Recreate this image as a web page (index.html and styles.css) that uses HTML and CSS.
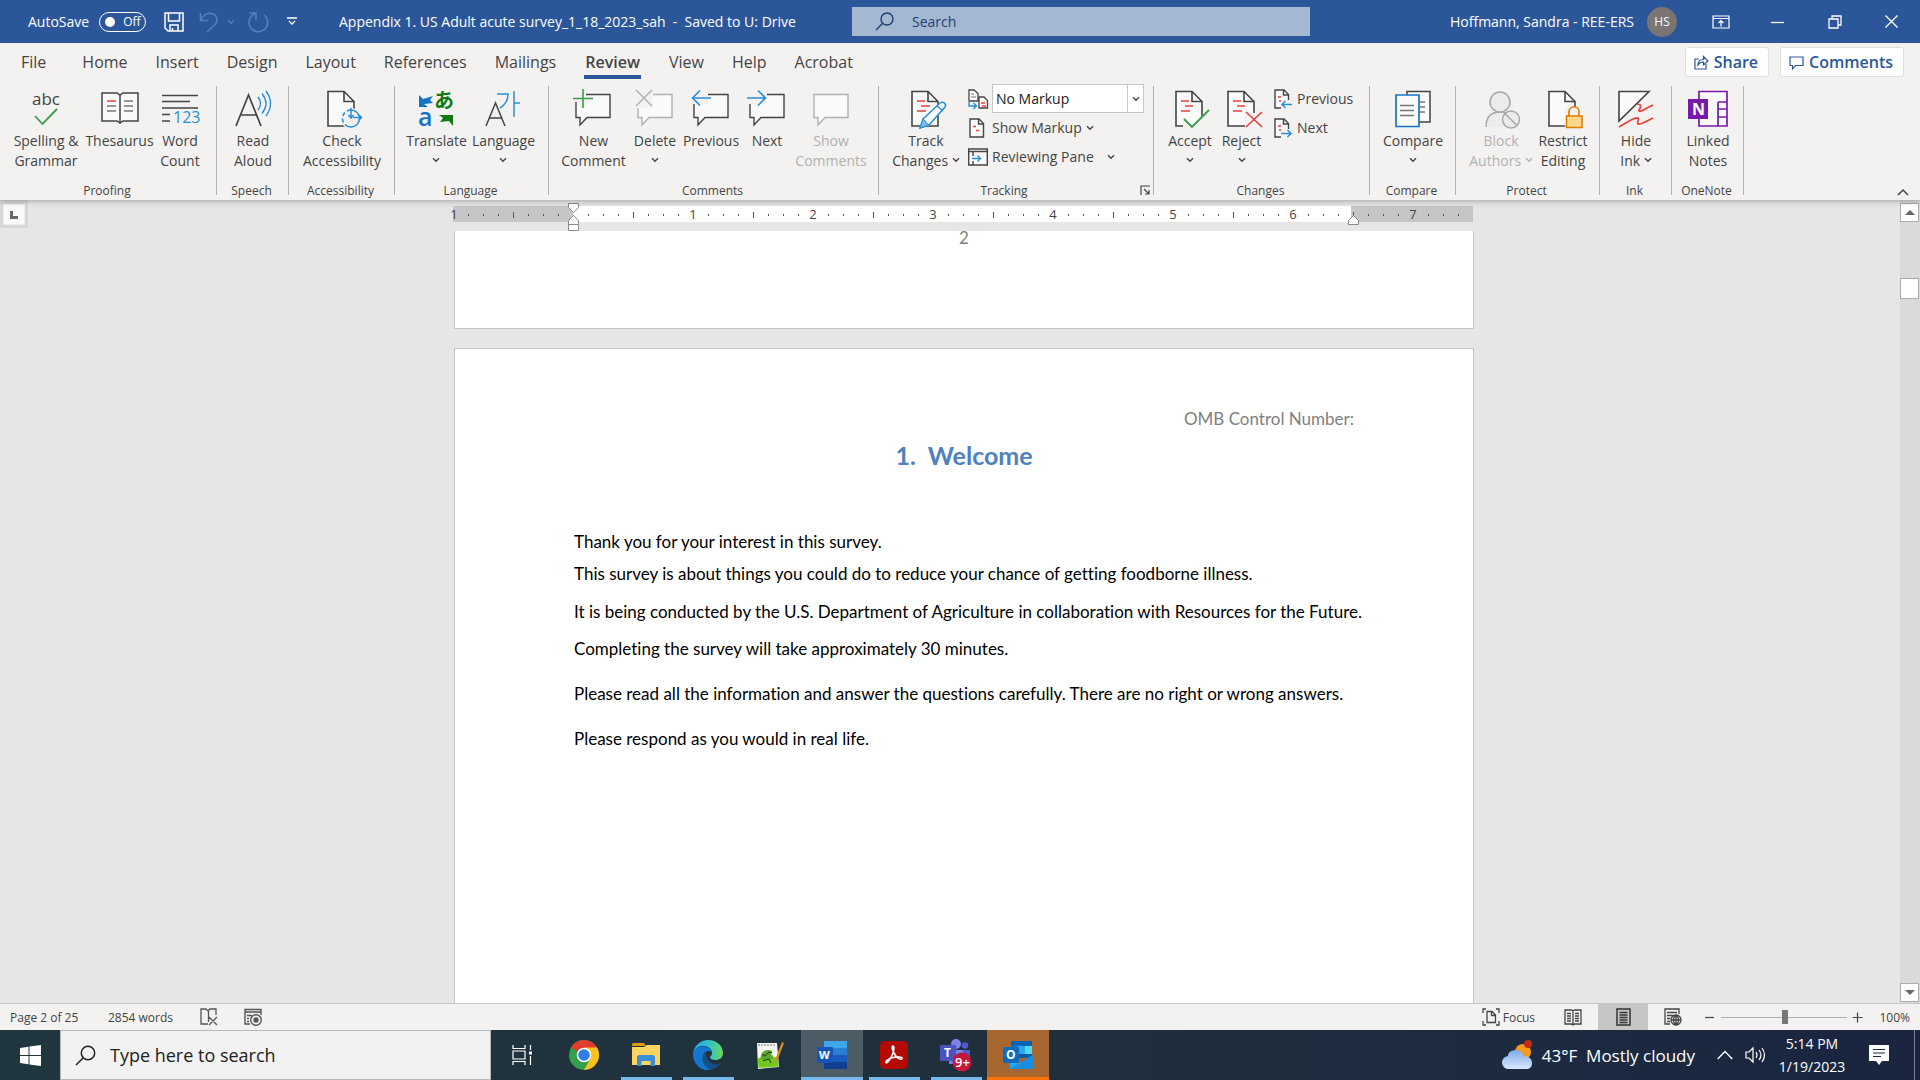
FILE: index.html
```html
<!DOCTYPE html>
<html lang="en">
<head>
    <meta charset="UTF-8">
    <meta name="viewport" content="width=device-width, initial-scale=1.0">
    <title>Appendix 1. US Adult acute survey_1_18_2023_sah</title>
    <link rel="stylesheet" href="styles.css">
</head>

<body>
    <!-- Shared shapes -->
    <svg class="defs" width="0" height="0" aria-hidden="true">
        <symbol id="chev" viewBox="0 0 8 6"><path d="M1 1.2l3 3 3-3" fill="none" stroke="currentColor" stroke-width="1.4"/></symbol>
        <symbol id="bubble" viewBox="0 0 40 38"><path d="M3 4.500h34v23H14l-7 7.500v-7.500H3z" fill="#fafafa" stroke="currentColor" stroke-width="1.400"/></symbol>
        <symbol id="doc" viewBox="0 0 36 38"><path d="M1 1.500h16l10 10v24.500H1z" fill="#fafafa" stroke="#444" stroke-width="1.600"/><path d="M17 1.500v10h10" fill="none" stroke="#444" stroke-width="1.600"/></symbol>
        <symbol id="doc-s" viewBox="0 0 20 20"><path d="M2 1h9l4.500 4.500V19H2z" fill="#fafafa" stroke="#444" stroke-width="1.400"/><path d="M10.500 1v5h5" fill="none" stroke="#444" stroke-width="1.400"/></symbol>
    </svg>

    <header class="titlebar">
        <div class="quick">
            <span>AutoSave</span>
            <button class="toggle" role="switch" aria-checked="false"><i></i>Off</button>
            <button class="icon save" aria-label="Save"><svg width="20" height="20" viewBox="0 0 20 20" fill="none" stroke="#fff" stroke-width="1.500"><path d="M1 1h18v18H4l-3-3zM4.500 1v8h11V1M6 19v-6h8v6M8.500 16v3"/></svg></button>
            <button class="icon undo" aria-label="Undo"><svg width="20" height="22" viewBox="0 0 20 22" fill="none" stroke="#5880bb" stroke-width="1.500"><path d="M1.500 2v7.500H9M1.500 9.500C5 3 9 1.500 13 2.500c5 1.500 6.500 7 3 11L8 21"/></svg></button>
            <button class="icon undo-more" aria-label="Undo list"><svg width="8" height="6"><use href="#chev"/></svg></button>
            <button class="icon redo" aria-label="Repeat"><svg width="22" height="22" viewBox="0 0 22 22" fill="none" stroke="#5880bb" stroke-width="1.500"><path d="M2 2h7v7M8.500 2.500A9.300 9.300 0 1 0 17 4"/></svg></button>
            <button class="icon more" aria-label="Customize Quick Access Toolbar"><svg width="10" height="9" viewBox="0 0 10 9" fill="none" stroke="#fff" stroke-width="1.300"><path d="M0 1h10M2 4l3 3 3-3"/></svg></button>
        </div>
        <div class="file-name">Appendix 1. US Adult acute survey_1_18_2023_sah &nbsp;-&nbsp; Saved to U: Drive</div>
        <label class="search">
            <svg width="19" height="19" viewBox="0 0 19 19" fill="none" stroke="#1e3f74" stroke-width="1.400"><circle cx="12" cy="7" r="6"/><path d="M7.500 11.500L1 18"/></svg>
            <input type="text" placeholder="Search" aria-label="Search">
        </label>
        <div class="account"><span>Hoffmann, Sandra - REE-ERS</span><span class="avatar">HS</span></div>
        <div class="window-buttons">
            <button aria-label="Ribbon Display Options"><svg width="18" height="14" viewBox="0 0 18 14" fill="none" stroke="#fff" stroke-width="1.200"><path d="M1 1h16v12H1zM1 3.500h16M9 11.500V6M6.500 8L9 5.500 11.500 8"/></svg></button>
            <button aria-label="Minimize"><svg width="13" height="14" viewBox="0 0 13 14"><path d="M0 7.500h13" stroke="#fff" stroke-width="1.300"/></svg></button>
            <button aria-label="Restore Down"><svg width="14" height="14" viewBox="0 0 14 14" fill="none" stroke="#fff" stroke-width="1.300"><path d="M1 4h9v9H1zM4 4V1h9v9h-3"/></svg></button>
            <button aria-label="Close"><svg width="13" height="13" viewBox="0 0 13 13"><path d="M.5.5l12 12M12.500.5l-12 12" stroke="#fff" stroke-width="1.400"/></svg></button>
        </div>
    </header>

    <nav class="tabs">
        <button>File</button>
        <button>Home</button>
        <button>Insert</button>
        <button>Design</button>
        <button>Layout</button>
        <button>References</button>
        <button>Mailings</button>
        <button class="active">Review</button>
        <button>View</button>
        <button>Help</button>
        <button>Acrobat</button>
        <div class="tab-actions">
            <button class="pill"><svg width="15" height="15" viewBox="0 0 15 15" fill="none" stroke="#2b579a" stroke-width="1.200"><path d="M5 4H1v10h11V9"/><path d="M4 10c0-4 2-5.500 5.500-5.500V1.500l4.500 4.500-4.500 4V7C7 7 5.500 7.500 4 10z"/></svg>Share</button>
            <button class="pill"><svg width="15" height="15" viewBox="0 0 15 15" fill="none" stroke="#2b579a" stroke-width="1.200"><path d="M1 2h13v8.500H6.500L3.500 14v-3.500H1z"/></svg>Comments</button>
        </div>
    </nav>

    <section class="ribbon">
        <div class="group proofing">
            <div class="tools">
                <button><svg width="40" height="38" viewBox="0 0 40 38"><text x="6" y="15" font-size="17" fill="#444">abc</text><path d="M9 26l7.500 8L31 19" fill="none" stroke="#3a9e4a" stroke-width="1.800"/></svg>Spelling &amp;<br>Grammar</button>
                <button><svg width="38" height="38" viewBox="0 0 38 38"><path d="M1 3h15l3 2 3-2h15v28H22l-3 2-3-2H1zM19 5v28" fill="#fafafa" stroke="#444" stroke-width="1.500"/><path d="M6 11h9" stroke="#e8403a" stroke-width="1.500"/><path d="M6 16h9M6 21h9M23 11h9M23 16h9M23 21h9" stroke="#777" stroke-width="1.300"/></svg>Thesaurus</button>
                <button><svg width="38" height="38" viewBox="0 0 38 38"><path d="M1 5.500h36M1 11.500h28M1 18h36M1 24.500h8M1 31h8" stroke="#444" stroke-width="1.400"/><text x="12" y="33" font-size="16" fill="#2b8fd6">123</text></svg>Word<br>Count</button>
            </div>
            <h2>Proofing</h2>
        </div>
        <div class="group speech">
            <div class="tools">
                <button><svg width="38" height="38" viewBox="0 0 38 38" fill="none"><path d="M2 36L14.500 5 27 36M6.500 25h16" stroke="#444" stroke-width="1.700"/><path d="M24 7q5 6.500 0 13M28 3.500q8 10 0 20M32 1q9 12.500 0 25" stroke="#2b8fd6" stroke-width="1.400"/></svg>Read<br>Aloud</button>
            </div>
            <h2>Speech</h2>
        </div>
        <div class="group accessibility">
            <div class="tools">
                <button><svg width="30" height="38" viewBox="0 0 30 38"><use href="#doc" width="36" height="38"/><circle cx="24" cy="28.500" r="10.500" fill="#f3f2f1"/><circle cx="24" cy="28.500" r="8.500" fill="none" stroke="#2b8fd6" stroke-width="1.500" stroke-dasharray="20 2.500 4 2.500 4 2.500"/><path d="M24 18v9.500M21.500 25l2.500 3 2.500-3M26 27.500h8M32 25l2.500 2.500L32 30" fill="none" stroke="#2b8fd6" stroke-width="1.500"/></svg>Check<br>Accessibility</button>
            </div>
            <h2>Accessibility</h2>
        </div>
        <div class="group language">
            <div class="tools">
                <button><svg width="36" height="38" viewBox="0 0 36 38"><path d="M1 5l4 4 10-3-3 4 3 3-9 1 4 3H1z" fill="#1473c6"/><path d="M35 36V25H21l4 3-3 4 9-1z" fill="#117a11"/><text x="0" y="36" font-size="25" font-weight="600" fill="#1473c6">a</text><text class="cjk" x="16" y="18" font-size="20" font-weight="700" fill="#117a11">あ</text></svg>Translate<svg class="chev" width="8" height="6"><use href="#chev"/></svg></button>
                <button><svg width="36" height="38" viewBox="0 0 36 38" fill="none"><path d="M1 36l9.500-23L20 36M4.500 28h12" stroke="#444" stroke-width="1.500"/><path d="M12 4h11c0 7-3 11-8 14M29 1v26M29 13h6" stroke="#2b8fd6" stroke-width="1.500"/></svg>Language<svg class="chev" width="8" height="6"><use href="#chev"/></svg></button>
            </div>
            <h2>Language</h2>
        </div>
        <div class="group comments">
            <div class="tools">
                <button><svg width="40" height="38" viewBox="0 0 40 38"><use href="#bubble"/><path d="M0 0h12v12H0z" fill="#f3f2f1"/><path d="M10 -1v19M1 9h19" stroke="#f3f2f1" stroke-width="6"/><path d="M10 -1v19M0 8.500h20" stroke="#3a9e4a" stroke-width="1.600"/></svg>New<br>Comment</button>
                <button disabled><svg width="40" height="38" viewBox="0 0 40 38"><use href="#bubble"/><path d="M0 0h18v18H0z" fill="#f3f2f1"/><path d="M1 0l16 16M17 0L1 16" stroke="#b1b1b1" stroke-width="1.500"/></svg><span class="on">Delete</span><svg class="chev on" width="8" height="6"><use href="#chev"/></svg></button>
                <button><svg width="40" height="38" viewBox="0 0 40 38"><use href="#bubble"/><path d="M0 0h17v14H0z" fill="#f3f2f1"/><path d="M20 8H1M9 .5L1.500 8 9 15.500" fill="none" stroke="#2b8fd6" stroke-width="1.600"/></svg>Previous</button>
                <button><svg width="40" height="38" viewBox="0 0 40 38"><use href="#bubble"/><path d="M0 0h20v14H0z" fill="#f3f2f1"/><path d="M0 8h19M11 .5L18.500 8 11 15.500" fill="none" stroke="#2b8fd6" stroke-width="1.600"/></svg>Next</button>
                <button disabled><svg width="40" height="38" viewBox="0 0 40 38"><use href="#bubble"/></svg>Show<br>Comments</button>
            </div>
            <h2>Comments</h2>
        </div>
        <div class="group tracking">
            <div class="tools">
                <button><svg width="30" height="38" viewBox="0 0 30 38"><use href="#doc" width="36" height="38"/><path d="M6 11h8M10 16h9M6 21h9" stroke="#e8403a" stroke-width="1.500"/><path d="M9 38l3-9 17-16c3-2 7 1 5 4L18 35z" fill="#fafafa" stroke="#2b8fd6" stroke-width="1.500"/><path d="M9 38l3-9 6 6z" fill="#7db9e8" stroke="#2b8fd6"/><path d="M26 16l6 5" stroke="#2b8fd6" stroke-width="1.300"/></svg>Track<br>Changes <svg class="chev-in" width="8" height="6"><use href="#chev"/></svg></button>
                <div class="rows">
                    <div class="row">
                        <svg width="20" height="20" viewBox="0 0 20 20"><path d="M1 1h5l4 3.500V12H1z" fill="#fafafa" stroke="#444" stroke-width="1.300"/><path d="M11 8h5l3.500 3.500V19H11z" fill="#fafafa" stroke="#444" stroke-width="1.300"/><path d="M3 5h3M3 8h5" stroke="#777"/><path d="M13 14h4M14 17h4" stroke="#e8403a" stroke-width="1.300"/><path d="M1 13v4h7M5.500 14l3 3-3 3" fill="none" stroke="#2b8fd6" stroke-width="1.400"/></svg>
                        <div class="markup">
                            <select aria-label="Display for Review"><option>No Markup</option></select>
                            <svg width="8" height="6"><use href="#chev"/></svg>
                        </div>
                    </div>
                    <button class="row"><svg width="20" height="20" viewBox="0 0 20 20"><use href="#doc-s"/><path d="M5 8.500h3M8 12.500h3" stroke="#e8403a" stroke-width="1.500"/></svg>Show Markup<svg width="8" height="6"><use href="#chev"/></svg></button>
                    <button class="row pane"><svg width="20" height="20" viewBox="0 0 20 20"><path d="M.7 2h18.600v16H.7z" fill="#fafafa" stroke="#444" stroke-width="1.400"/><path d="M1 4.500h18M5 5v4M5 14v4" stroke="#444" stroke-width="1.400"/><path d="M4 11.500h8M9.500 8.500l3 3-3 3" fill="none" stroke="#2b8fd6" stroke-width="1.400"/></svg>Reviewing Pane<svg width="8" height="6"><use href="#chev"/></svg></button>
                </div>
            </div>
            <h2>Tracking</h2>
            <button class="launcher" aria-label="Change Tracking Options"><svg width="10" height="10" viewBox="0 0 10 10" fill="none" stroke="#444" stroke-width="1.200"><path d="M1 10V1h9M4 4l5 5M9 5v4H5"/></svg></button>
        </div>
        <div class="group changes">
            <div class="tools">
                <button><svg width="30" height="38" viewBox="0 0 30 38"><use href="#doc" width="36" height="38"/><path d="M6 11h8M10 16h8M6 21h9" stroke="#e8403a" stroke-width="1.500"/><path d="M8 26l9 10L35 19v19H8z" fill="#f3f2f1"/><path d="M9 29l8 8 17-17" fill="none" stroke="#3a9e4a" stroke-width="1.800"/></svg>Accept<svg class="chev" width="8" height="6"><use href="#chev"/></svg></button>
                <button><svg width="30" height="38" viewBox="0 0 30 38"><use href="#doc" width="36" height="38"/><path d="M6 11h8M10 16h8M6 21h9" stroke="#e8403a" stroke-width="1.500"/><path d="M18 23h16v15H18z" fill="#f3f2f1"/><path d="M19 22l16 15M35 22L19 37" stroke="#e8403a" stroke-width="1.600"/></svg>Reject<svg class="chev" width="8" height="6"><use href="#chev"/></svg></button>
                <div class="rows">
                    <button class="row"><svg width="20" height="20" viewBox="0 0 20 20"><use href="#doc-s"/><path d="M5 8h3M6 12h3" stroke="#e8403a" stroke-width="1.500"/><path d="M8 11h12v9H8z" fill="#f3f2f1"/><path d="M19 15.500H9M12.500 12L9 15.500l3.500 3.500" fill="none" stroke="#2b8fd6" stroke-width="1.500"/></svg>Previous</button>
                    <button class="row"><svg width="20" height="20" viewBox="0 0 20 20"><use href="#doc-s"/><path d="M5 8h3M6 12h3" stroke="#e8403a" stroke-width="1.500"/><path d="M8 11h12v9H8z" fill="#f3f2f1"/><path d="M8 15.500h10M14.500 12l3.500 3.500-3.500 3.500" fill="none" stroke="#2b8fd6" stroke-width="1.500"/></svg>Next</button>
                </div>
            </div>
            <h2>Changes</h2>
        </div>
        <div class="group compare">
            <div class="tools">
                <button><svg width="36" height="38" viewBox="0 0 36 38"><path d="M12 1.500h23V32H12z" fill="#fafafa" stroke="#444" stroke-width="1.500"/><path d="M25 12h5M25 17h5M25 22h5" stroke="#777" stroke-width="1.400"/><path d="M1 5h23v31.500H1z" fill="#fafafa" stroke="#1473c6" stroke-width="1.700"/><path d="M5 15.500h14M5 20.500h14M5 25.500h14" stroke="#777" stroke-width="1.500"/></svg>Compare<svg class="chev" width="8" height="6"><use href="#chev"/></svg></button>
            </div>
            <h2>Compare</h2>
        </div>
        <div class="group protect">
            <div class="tools">
                <button disabled><svg width="34" height="38" viewBox="0 0 34 38" fill="#ececec" stroke="#a8a8a8" stroke-width="1.500"><path d="M2 37c0-11 6-15 14-15s14 4 14 15" stroke-width="1.500"/><circle cx="16" cy="12" r="10"/><circle cx="27" cy="29.500" r="8.500"/><path d="M21 23.500l12 12"/></svg>Block<br>Authors <svg class="chev-in" width="8" height="6"><use href="#chev"/></svg></button>
                <button><svg width="30" height="38" viewBox="0 0 30 38"><use href="#doc" width="36" height="38"/><path d="M17 17h17v21H17z" fill="#f3f2f1"/><path d="M21 26v-4c0-7 10-7 10 0v4" fill="none" stroke="#e07b00" stroke-width="1.600"/><path d="M18.500 26h15.500v11.500H18.500z" fill="#fbd88a" stroke="#e07b00" stroke-width="1.500"/></svg>Restrict<br>Editing</button>
            </div>
            <h2>Protect</h2>
        </div>
        <div class="group ink">
            <div class="tools">
                <button><svg width="36" height="38" viewBox="0 0 36 38" fill="none"><path d="M1 1.500h30L1 31z" fill="#fafafa" stroke="#444" stroke-width="1.600"/><path d="M19 14c5 0 4 3 2 6-1 3 5 0 8-2l6-3M1 37l12-7c6-3 9-3 7 1-2 5 3 3 7 1l8-4" stroke="#ee4038" stroke-width="1.700"/></svg>Hide<br>Ink <svg class="chev-in" width="8" height="6"><use href="#chev"/></svg></button>
            </div>
            <h2>Ink</h2>
        </div>
        <div class="group onenote">
            <div class="tools">
                <button><svg width="40" height="38" viewBox="0 0 40 38"><path d="M11 1.500h28V36H11zM30 12h9M30 19h9M30 27h9M30 12v24" fill="#fafafa" stroke="#7719aa" stroke-width="1.700"/><path d="M0 9h20v20H0z" fill="#7719aa"/><text x="4" y="25" font-size="16" font-weight="700" fill="#fff">N</text></svg>Linked<br>Notes</button>
            </div>
            <h2>OneNote</h2>
        </div>
        <button class="collapse" aria-label="Collapse the Ribbon"><svg width="12" height="8" viewBox="0 0 12 8"><path d="M1 7l5-5 5 5" fill="none" stroke="#444" stroke-width="1.500"/></svg></button>
    </section>

    <main class="workspace">
        <div class="corner"><button aria-label="Left Tab"><svg width="8" height="8" viewBox="0 0 8 8"><path d="M1.500 0v6.500H8" fill="none" stroke="#666" stroke-width="3"/></svg></button></div>
        <div class="canvas">
            <!-- 120 units per inch, zero sits at the left margin -->
            <svg class="ruler" width="1020" height="31" viewBox="1 0 1020 31">
                <defs>
                    <pattern id="inch" x="0" y="6" width="120" height="16" patternUnits="userSpaceOnUse">
                        <path d="M15.500 8v2M30.500 8v2M45.500 8v2M75.500 8v2M90.500 8v2M105.500 8v2M60.500 6v6" stroke="#555"/>
                    </pattern>
                </defs>
                <path d="M0 6h1020v16H0z" fill="#c6c6c6"/>
                <path d="M120 6h778v16H120z" fill="#fff"/>
                <path d="M1 6h1015v16H1z" fill="url(#inch)"/>
                <g class="numbers">
                    <text x="1" y="19">1</text>
                    <text x="240" y="19">1</text>
                    <text x="360" y="19">2</text>
                    <text x="480" y="19">3</text>
                    <text x="600" y="19">4</text>
                    <text x="720" y="19">5</text>
                    <text x="840" y="19">6</text>
                    <text x="960" y="19">7</text>
                </g>
                <path d="M115.500 3.500h10v4l-5 5-5-5zM120.500 15.500l5 5v4h-10v-4zM115.500 24.500h10v6h-10zM900.500 15.500l5 5v4h-10v-4z" fill="#fff" stroke="#8a8a8a"/>
            </svg>
            <article class="page page-end"><p class="page-number">2</p></article>
            <article class="page">
                <p class="running-head">OMB Control Number:</p>
                <h1>1.&nbsp; Welcome</h1>
                <p>Thank you for your interest in this survey.</p>
                <p class="tight">This survey is about things you could do to reduce your chance of getting foodborne illness.</p>
                <p>It is being conducted by the U.S. Department of Agriculture in collaboration with Resources for the Future.</p>
                <p>Completing the survey will take approximately 30 minutes.</p>
                <p class="loose">Please read all the information and answer the questions carefully. There are no right or wrong answers.</p>
                <p class="loose">Please respond as you would in real life.</p>
            </article>
        </div>
        <div class="scrollbar">
            <button aria-label="Scroll up"><svg width="10" height="5"><path d="M0 5l5-5 5 5z" fill="#666"/></svg></button>
            <div class="thumb"></div>
            <button aria-label="Scroll down"><svg width="10" height="5"><path d="M0 0l5 5 5-5z" fill="#666"/></svg></button>
        </div>
    </main>

    <footer class="status">
        <span class="page-count">Page 2 of 25</span>
        <span class="word-count">2854 words</span>
        <svg class="proof" width="18" height="18" viewBox="0 0 18 18" fill="none" stroke="#555" stroke-width="1.300"><path d="M8 16H1V1h5l2 2 2-2h6v6M8.500 3v11M9 9l8 8M17 9l-8 8"/></svg>
        <svg width="18" height="18" viewBox="0 0 18 18" fill="none" stroke="#555" stroke-width="1.400"><path d="M6 16H1V1.500h16V7M1 4h16M3 7.500h5M3 10.500h2M3 13.500h2"/><circle cx="12" cy="12" r="5.300"/><circle cx="12" cy="12" r="2" fill="#555"/></svg>
        <div class="views">
            <button class="focus"><svg width="18" height="18" viewBox="0 0 18 18" fill="none" stroke="#444" stroke-width="1.300"><path d="M4 1H1v4M14 1h3v4M4 17H1v-4M14 17h3v-4M5 3.500h5l3.500 3.500v7.500H5zM9.500 3.500v4h4"/></svg>Focus</button>
            <button class="view" aria-label="Read Mode"><svg width="18" height="17" viewBox="0 0 18 17" fill="none" stroke="#444" stroke-width="1.300"><path d="M1 1h6.500L9 2l1.500-1H17v14h-6.500L9 16l-1.500-1H1zM9 2v14M3 4.500h4M3 7h4M3 9.500h4M3 12h4M11 4.500h4M11 7h4M11 9.500h4M11 12h4"/></svg></button>
            <button class="view current" aria-label="Print Layout"><svg width="15" height="18" viewBox="0 0 15 18" fill="none" stroke="#333" stroke-width="1.500"><path d="M1 1h13v16H1zM3.500 4.500h8M3.500 7h8M3.500 9.500h8M3.500 12h8M3.500 14.500h8"/></svg></button>
            <button class="view" aria-label="Web Layout"><svg width="18" height="18" viewBox="0 0 18 18" fill="none" stroke="#444" stroke-width="1.300"><path d="M6 16H1V1h14v5M3 4.500h10M3 7.500h6M3 10.500h3M3 13.500h3"/><circle cx="12" cy="12" r="5"/><path d="M7 12h10M12 7v10M12 7c-3.500 3-3.500 7 0 10M12 7c3.500 3 3.500 7 0 10"/></svg></button>
            <button class="step" aria-label="Zoom Out"><svg width="11" height="11"><path d="M1 5.500h9" stroke="#444" stroke-width="1.200"/></svg></button>
            <input class="zoom" type="range" min="10" max="190" value="101" aria-label="Zoom">
            <button class="step" aria-label="Zoom In"><svg width="11" height="11"><path d="M.5 5.500h10M5.500.5v10" stroke="#444" stroke-width="1.200"/></svg></button>
            <span class="percent">100%</span>
        </div>
    </footer>

    <div class="taskbar">
        <button class="app start" aria-label="Start"><svg width="21" height="21" viewBox="0 0 21 21" fill="#fff"><path d="M0 3l8.500-1.200V10H0zM9.500 1.600L21 0v10H9.500zM0 11h8.500v8.200L0 18zM9.500 11H21v10L9.500 19.400z"/></svg></button>
        <label class="task-search">
            <svg width="21" height="21" viewBox="0 0 21 21" fill="none" stroke="#222" stroke-width="1.500"><circle cx="13" cy="8" r="6.700"/><path d="M8.300 12.700L1 20"/></svg>
            <input type="text" placeholder="Type here to search" aria-label="Type here to search">
        </label>
        <button class="app" aria-label="Task View"><svg width="21" height="20" viewBox="0 0 21 20" fill="none" stroke="#fff" stroke-width="1.200"><path d="M1 0v3.500h12V0M1 20v-3.500h12V20M1 6h12v8H1zM18.500 0v5M18.500 11v9"/><path d="M17 6.500h3v3h-3z" fill="#fff" stroke="none"/></svg></button>
        <button class="app" aria-label="Google Chrome"><svg width="30" height="30" viewBox="0 0 30 30"><circle cx="15" cy="15" r="15" fill="#34a04c"/><path d="M15 15L2 7.500A15 15 0 0 1 28 7.500z" fill="#e33b2e"/><path d="M15 7.500h13A15 15 0 0 1 15 30l6.500-11.300z" fill="#fcc21b"/><circle cx="15" cy="15" r="7.300" fill="#fff"/><circle cx="15" cy="15" r="5.800" fill="#2f7de9"/></svg></button>
        <button class="app open" aria-label="File Explorer"><svg width="28" height="24" viewBox="0 0 28 24"><path d="M0 1.500Q0 0 1.500 0H12l2 3H0z" fill="#dd9a05"/><path d="M0 4h12l3-2h13v20H0z" fill="#fcd462"/><path d="M5 14.500Q5 12 7.500 12h13q2.500 0 2.500 2.500V23h-4.500v-5h-9v5H5z" fill="#3a8fd6"/></svg></button>
        <button class="app open" aria-label="Microsoft Edge"><svg width="30" height="30" viewBox="0 0 30 30">
            <defs>
                <linearGradient id="edge" x1="0" x2="1"><stop offset="0" stop-color="#25a3e0"/><stop offset=".55" stop-color="#35c1c8"/><stop offset="1" stop-color="#6bd95b"/></linearGradient>
            </defs>
            <path d="M0 14C1 5 8 0 15 0c9 0 15 6 15 13 0 5-4 7-7 7-4 0-6-1-6-2.500s2-1.500 2-4.500c0-5-5-7-9-7-5 0-8 3-10 8z" fill="url(#edge)"/>
            <path d="M0 14c1-5 5-7.500 9.500-7.500S19 9 19 12.500c-2-2-5-2-7 0-5 5-1 14 6 17C8 32 0 24 0 14z" fill="#1377cf"/>
            <path d="M12 12.500c-5 5-2 15 6 17 4-1 8-3 10-6.500-5 2.500-10 1-12.500-2.500S13 14 12 12.500z" fill="#174f86"/></svg></button>
        <button class="app" aria-label="Notepad++"><svg width="28" height="28" viewBox="0 0 28 28"><path d="M1 2h20l2 24-21 2z" fill="#f4f6ee"/><path d="M1.800 17l19.900-1 1 9.500-20.200 1.500z" fill="#73c91d"/><path d="M3 3v2M6 3v2M9 3v2M12 3v2M15 3v2M18 3v2" stroke="#777"/><path d="M5 15c1-6 7-7 11-5l-1 4c3 0 3 3 0 4l-7 1c-3 0-4-2-3-4z" fill="#5aa62e"/><path d="M6 13l3 2 4-4 3 1M7 20l6-2 2 4" fill="none" stroke="#173a0d"/><path d="M26 1l2 1-7 18-2 2V19z" fill="#d98f1a"/></svg></button>
        <button class="app open word" aria-label="Word"><svg width="30" height="28" viewBox="0 0 30 28"><path d="M7 0h23v7H7z" fill="#41a5ee"/><path d="M7 7h23v7H7z" fill="#2b7cd3"/><path d="M7 14h23v7H7z" fill="#185abd"/><path d="M7 21h23v7H7z" fill="#103f91"/><rect y="6" width="16" height="16" rx="1" fill="#1756b8"/><text x="2" y="18" font-size="11" font-weight="700" fill="#fff">W</text></svg></button>
        <button class="app open" aria-label="Adobe Acrobat"><svg width="28" height="28" viewBox="0 0 28 28"><rect width="28" height="28" rx="5" fill="#b30b00"/><path d="M13 5c-2 0 0 6 2.500 9.500S21 19 22 17.500s-5-2-9-1-8 3.500-7 5 4-3 6-7 2.500-9.500 1-9.500z" fill="none" stroke="#fff" stroke-width="1.600"/></svg></button>
        <button class="app open" aria-label="Microsoft Teams"><svg width="32" height="32" viewBox="0 0 32 32"><circle cx="16" cy="5" r="5" fill="#7b83eb"/><circle cx="25" cy="6.500" r="3.300" fill="#5059c9"/><path d="M20 11h10v12H20z" fill="#5059c9"/><path d="M9 11h14v14H9z" fill="#7b83eb"/><rect y="6" width="16" height="16" rx="1" fill="#4b53bc"/><text x="4" y="18" font-size="12" font-weight="700" fill="#fff">T</text><circle cx="22" cy="23" r="9.500" fill="#c4153a"/><text x="15" y="28" font-size="13" font-weight="600" fill="#fff">9+</text></svg></button>
        <button class="app open outlook" aria-label="Outlook"><svg width="30" height="28" viewBox="0 0 30 28"><path d="M8 0h21v8H8z" fill="#0364b8"/><path d="M8 5h7v8H8z" fill="#0f78d4"/><path d="M15 5h7v8h-7z" fill="#28a8ea"/><path d="M22 5h7v8h-7z" fill="#50d9ff"/><path d="M8 13h21v4H8z" fill="#0a5aa6"/><path d="M7 28V15l11 7 12-8v13q0 1-1 1z" fill="#28a8ea"/><path d="M7 28l23-14v13q0 1-1 1z" fill="#1a8fe0"/><rect y="6" width="16" height="16" rx="1" fill="#0f6cbd"/><text x="3" y="18" font-size="12" font-weight="700" fill="#fff">O</text></svg></button>
        <div class="tray">
            <button class="weather"><svg width="30" height="30" viewBox="0 0 30 30">
                <defs><linearGradient id="cloud" x1="0" x2="0" y1="0" y2="1"><stop offset="0" stop-color="#7fa9ea"/><stop offset="1" stop-color="#d9e7fb"/></linearGradient></defs>
                <circle cx="21" cy="12" r="8" fill="#f59a1c"/><circle cx="26" cy="4" r="4" fill="#c42b1c"/><path d="M7 29a6.500 6.500 0 0 1-1-13c0-4 4-6 8-6 5 0 7 3 7.500 6 5 0 8.500 2.500 8.500 7 0 4-2 6-6 6z" fill="url(#cloud)"/></svg>43°F&nbsp; Mostly cloudy</button>
            <button class="up" aria-label="Show hidden icons"><svg width="16" height="10" viewBox="0 0 16 10"><path d="M.7 9L8 1.500 15.300 9" fill="none" stroke="#fff" stroke-width="1.400"/></svg></button>
            <button class="sound" aria-label="Speakers"><svg width="20" height="18" viewBox="0 0 20 18" fill="none" stroke="#fff" stroke-width="1.200"><path d="M1 6h3l4-4v14l-4-4H1zM11 6q2 3 0 6M14 4q4 5 0 10M17 2q5 7 0 14"/></svg></button>
            <div class="clock">5:14 PM<br>1/19/2023</div>
            <button class="notify" aria-label="Notifications"><svg width="20" height="20" viewBox="0 0 20 20"><path d="M0 0h20v16h-7l-3 4-3-4H0z" fill="#fff"/><path d="M4 4.500h12M4 8h12M4 11.500h8" stroke="#1b2740" stroke-width="1.200"/></svg></button>
        </div>
    </div>
</body>
</html>
```
FILE: styles.css
```css
* {
    box-sizing: border-box;
}

body {
    font-family: "Open Sans", "Noto Sans", sans-serif;
    font-size: 14px;
    margin: 0;
    height: 100vh;
    display: flex;
    flex-direction: column;
    overflow: hidden;
    color: #444;
    background-color: #e6e6e6;
}

button, input, select {
    font: inherit;
    color: inherit;
    background: none;
    border: 0;
    padding: 0;
    margin: 0;
}

button { white-space: nowrap; }

svg {
    display: block;
    flex: none;
    overflow: visible;
}

.defs { position: absolute; }

.cjk { font-family: "Noto Sans CJK JP", sans-serif; }

/* Title bar */
.titlebar {
    flex: none;
    height: 43px;
    display: flex;
    align-items: center;
    background-color: #2b579a;
    color: #fff;
}

.quick {
    display: flex;
    align-items: center;
    width: 339px;
    padding-left: 28px;
}

.toggle {
    width: 47px;
    height: 20px;
    margin: 0 18px 0 10px;
    padding-left: 5px;
    border: 1px solid #fff;
    border-radius: 10px;
    display: flex;
    align-items: center;
    gap: 8px;
    font-size: 12px;
}

.toggle i {
    width: 10px;
    height: 10px;
    border-radius: 50%;
    background-color: #fff;
}

.undo { margin-left: 15px; }
.undo-more { margin: 0 12px 0 8px; color: #5880bb; }
.more { margin-left: 18px; }

.file-name { width: 513px; }

.search {
    flex: none;
    width: 458px;
    height: 29px;
    padding-left: 23px;
    display: flex;
    align-items: center;
    gap: 18px;
    background-color: #a5b8d1;
    color: #1e3f74;
}

.search input::placeholder { color: #1e3f74; opacity: 1; }

.account {
    flex: 1;
    display: flex;
    align-items: center;
    justify-content: flex-end;
    gap: 13px;
    padding-right: 15px;
}

.avatar {
    width: 30px;
    height: 30px;
    border-radius: 50%;
    background-color: #7a7574;
    font-size: 12px;
    line-height: 30px;
    text-align: center;
}

.window-buttons { display: flex; }

.window-buttons button {
    width: 57px;
    height: 43px;
    display: flex;
    align-items: center;
    justify-content: center;
}

/* Tabs */
.tabs {
    position: relative;
    z-index: 2;
    flex: none;
    height: 40px;
    padding: 0 16px 0 21px;
    display: flex;
    gap: 28px;
    background-color: #f3f2f1;
    font-size: 16px;
}

.tabs > button {
    height: 36px;
    line-height: 38px;
    border-bottom: 4px solid transparent;
}

.tabs > button:first-child { margin-right: 8px; }

.tabs > .active {
    padding: 0 1px;
    font-weight: 600;
    border-color: #2b579a;
}

.tab-actions {
    margin-left: auto;
    padding-top: 4px;
    display: flex;
    gap: 11px;
}

.pill {
    height: 30px;
    padding: 0 10px 0 8px;
    display: flex;
    align-items: center;
    gap: 5px;
    border: 1px solid #e1dfdd;
    border-radius: 3px;
    background-color: #fff;
    color: #2b579a;
    font-weight: 600;
}

/* Ribbon */
.ribbon {
    position: relative;
    z-index: 1;
    flex: none;
    height: 117px;
    display: flex;
    background-color: #f3f2f1;
    box-shadow: 0 1px 6px rgba(0, 0, 0, 0.3);
    line-height: 20px;
}

.group {
    position: relative;
    display: flex;
    flex-direction: column;
    justify-content: space-between;
}

/* divider between groups */
.group::after {
    content: "";
    position: absolute;
    top: 3px;
    right: 0;
    bottom: 5px;
    width: 1px;
    background-color: #b3b0ad;
}

.group h2 {
    margin: 0;
    padding-right: 3px;
    font-size: 12px;
    font-weight: normal;
    line-height: 18px;
    text-align: center;
}

.tools {
    display: grid;
    justify-content: start;
    align-items: start;
    padding-top: 7px;
}

.tools > button {
    display: flow-root;
    text-align: center;
    justify-self: center;
}

.tools > button > svg { margin: 0 auto 3px; }
.tools > button > .chev { margin: 6px auto 0; }
.tools > button > .chev-in { display: inline-block; margin: 0 0 3px; }

.tools button:disabled { color: #b1b1b1; }
.tools .on { color: #444; }

.proofing { width: 217px; }
.proofing .tools { padding-left: 6px; grid-template-columns: 80px 67px 54px; }
.speech, .ink, .onenote { width: 72px; }
.speech .tools, .ink .tools, .onenote .tools { grid-template-columns: 72px; }
.accessibility { width: 106px; }
.accessibility .tools { grid-template-columns: 106px; }
.language { width: 154px; }
.language .tools { padding-left: 8px; grid-template-columns: 67px 67px; }
.comments { width: 330px; }
.comments .tools { padding-left: 7px; grid-template-columns: 75px 48px 64px 48px 80px; }
.tracking { width: 275px; }
.tracking .tools { padding-left: 8px; grid-template-columns: 78px auto; }
.tracking h2 { padding-right: 25px; }
.changes { width: 216px; }
.changes .tools { padding-left: 8px; grid-template-columns: 56px 47px auto; }
.compare { width: 86px; }
.compare .tools { grid-template-columns: 86px; }
.protect { width: 144px; }
.protect .tools { padding-left: 7px; grid-template-columns: 76px 48px; }

.rows {
    margin-top: -6px;
    padding-left: 3px;
    display: flex;
    flex-direction: column;
}

.changes .rows { padding-left: 8px; }

.row {
    height: 29px;
    display: flex;
    align-items: center;
    gap: 4px;
}

.pane svg:last-child { margin-left: 9px; }

.markup {
    position: relative;
    width: 152px;
    height: 29px;
}

.markup select {
    appearance: none;
    width: 100%;
    height: 100%;
    padding-left: 3px;
    border: 1px solid #c8c6c4;
    background: linear-gradient(#c8c6c4, #c8c6c4) right 15px top 0 / 1px 100% no-repeat #fff;
    color: #222;
}

.markup svg {
    position: absolute;
    right: 4px;
    top: 12px;
    pointer-events: none;
}

.launcher {
    position: absolute;
    right: 4px;
    bottom: 5px;
}

.collapse {
    margin: auto 11px 4px auto;
}

/* Document area */
.workspace {
    flex: 1;
    min-height: 0;
    display: flex;
}

.corner {
    width: 28px;
    height: 28px;
    padding: 4px 2px 2px 3px;
    background-color: #d8d8d8;
}

.corner button {
    width: 22px;
    height: 21px;
    display: flex;
    align-items: center;
    justify-content: center;
    background-color: #fafafa;
    border: 1px solid #eee;
}

.canvas {
    flex: 1;
    display: flex;
    flex-direction: column;
    align-items: center;
    overflow: hidden;
}

.ruler { flex: none; }

.numbers {
    font-size: 13px;
    fill: #444;
    text-anchor: middle;
}

.page {
    flex: none;
    width: 1020px;
    min-height: 800px;
    padding: 58px 114px 0 119px;
    border: 1px solid #c6c6c6;
    background-color: #fff;
    color: #000;
    font-family: Lato, sans-serif;
    font-size: 17px;
    font-variant-ligatures: none;
    line-height: 24px;
}

.page p {
    margin: 0 0 13px;
    white-space: nowrap;
}

.page .tight { margin: -5px 0 14px; }
.page .loose { margin: 21px 0 0; }

.page .running-head {
    margin: 0;
    padding-right: 5px;
    text-align: right;
    color: #7f7f7f;
}

.page h1 {
    margin: 0 0 51px;
    padding-right: 5px;
    color: #4f81bd;
    font-size: 25px;
    line-height: 48px;
    text-align: center;
}

.page-end {
    min-height: 0;
    height: 98px;
    margin-bottom: 19px;
    padding: 0;
    border-top: 0;
}

.page .page-number {
    margin: 0;
    line-height: 13px;
    text-align: center;
    color: #7f7f7f;
}

.scrollbar {
    width: 20px;
    padding: 3px 1px 1px 0;
    display: flex;
    flex-direction: column;
    background-color: #dadada;
}

.scrollbar button, .thumb {
    height: 19px;
    display: flex;
    align-items: center;
    justify-content: center;
    background-color: #fff;
    border: 1px solid #ababab;
}

.thumb {
    height: 21px;
    margin: 56px 0 auto;
}

/* Status bar */
.status {
    flex: none;
    height: 27px;
    padding: 0 10px;
    display: flex;
    align-items: center;
    border-top: 1px solid #c6c6c6;
    background-color: #f3f2f1;
    font-size: 12px;
}

.page-count { width: 98px; }
.word-count { width: 92px; }
.proof { margin-right: 26px; }

.views {
    height: 100%;
    margin-left: auto;
    display: flex;
    align-items: center;
}

.focus {
    display: flex;
    align-items: center;
    gap: 3px;
    margin-right: 13px;
}

.view {
    width: 50px;
    height: 100%;
    display: flex;
    align-items: center;
    justify-content: center;
}

.current { background-color: #c8c6c4; }

.step:nth-of-type(5) { margin-left: 6px; }

.zoom {
    appearance: none;
    width: 126px;
    height: 14px;
    margin: 0 5px 0 6px;
    background: linear-gradient(#b3b0ad, #b3b0ad) center / 100% 1px no-repeat;
}

.zoom::-webkit-slider-thumb {
    appearance: none;
    width: 6px;
    height: 14px;
    background-color: #767676;
}

.percent {
    width: 47px;
    text-align: right;
}

/* Taskbar */
.taskbar {
    flex: none;
    height: 50px;
    display: flex;
    background: linear-gradient(90deg, #203740, #1f303c 50%, #1c2b40 80%, #1a2540);
    color: #fff;
}

.app {
    flex: none;
    width: 62px;
    display: flex;
    align-items: center;
    justify-content: center;
    border: 0 solid transparent;
}

.start { width: 60px; }

.task-search {
    width: 431px;
    padding-left: 14px;
    display: flex;
    align-items: center;
    gap: 14px;
    border: 1px solid #b8b8b8;
    background-color: #f2f2f2;
    color: #222;
    font-size: 18px;
}

.task-search input { width: 300px; }
.task-search input::placeholder { color: #222; opacity: 1; }

/* running apps get a strip along the bottom edge */
.open {
    background: linear-gradient(#76b9ed, #76b9ed) center bottom / 51px 3px no-repeat;
}

.word {
    background-color: #4d5d66;
    background-size: 100% 3px;
}

.outlook {
    background-color: #a8672f;
    background-image: linear-gradient(#ff7300, #ff7300);
    background-size: 100% 3px;
}

.tray {
    margin-left: auto;
    padding-right: 5px;
    display: flex;
    align-items: center;
}

.weather {
    display: flex;
    align-items: center;
    gap: 10px;
    font-size: 17px;
}

.up { margin-left: 22px; }
.sound { margin-left: 12px; }

.clock {
    width: 94px;
    text-align: center;
    line-height: 23px;
}

.notify {
    height: 100%;
    padding: 0 25px 0 10px;
    border-right: 1px solid #7b8496;
}
```
